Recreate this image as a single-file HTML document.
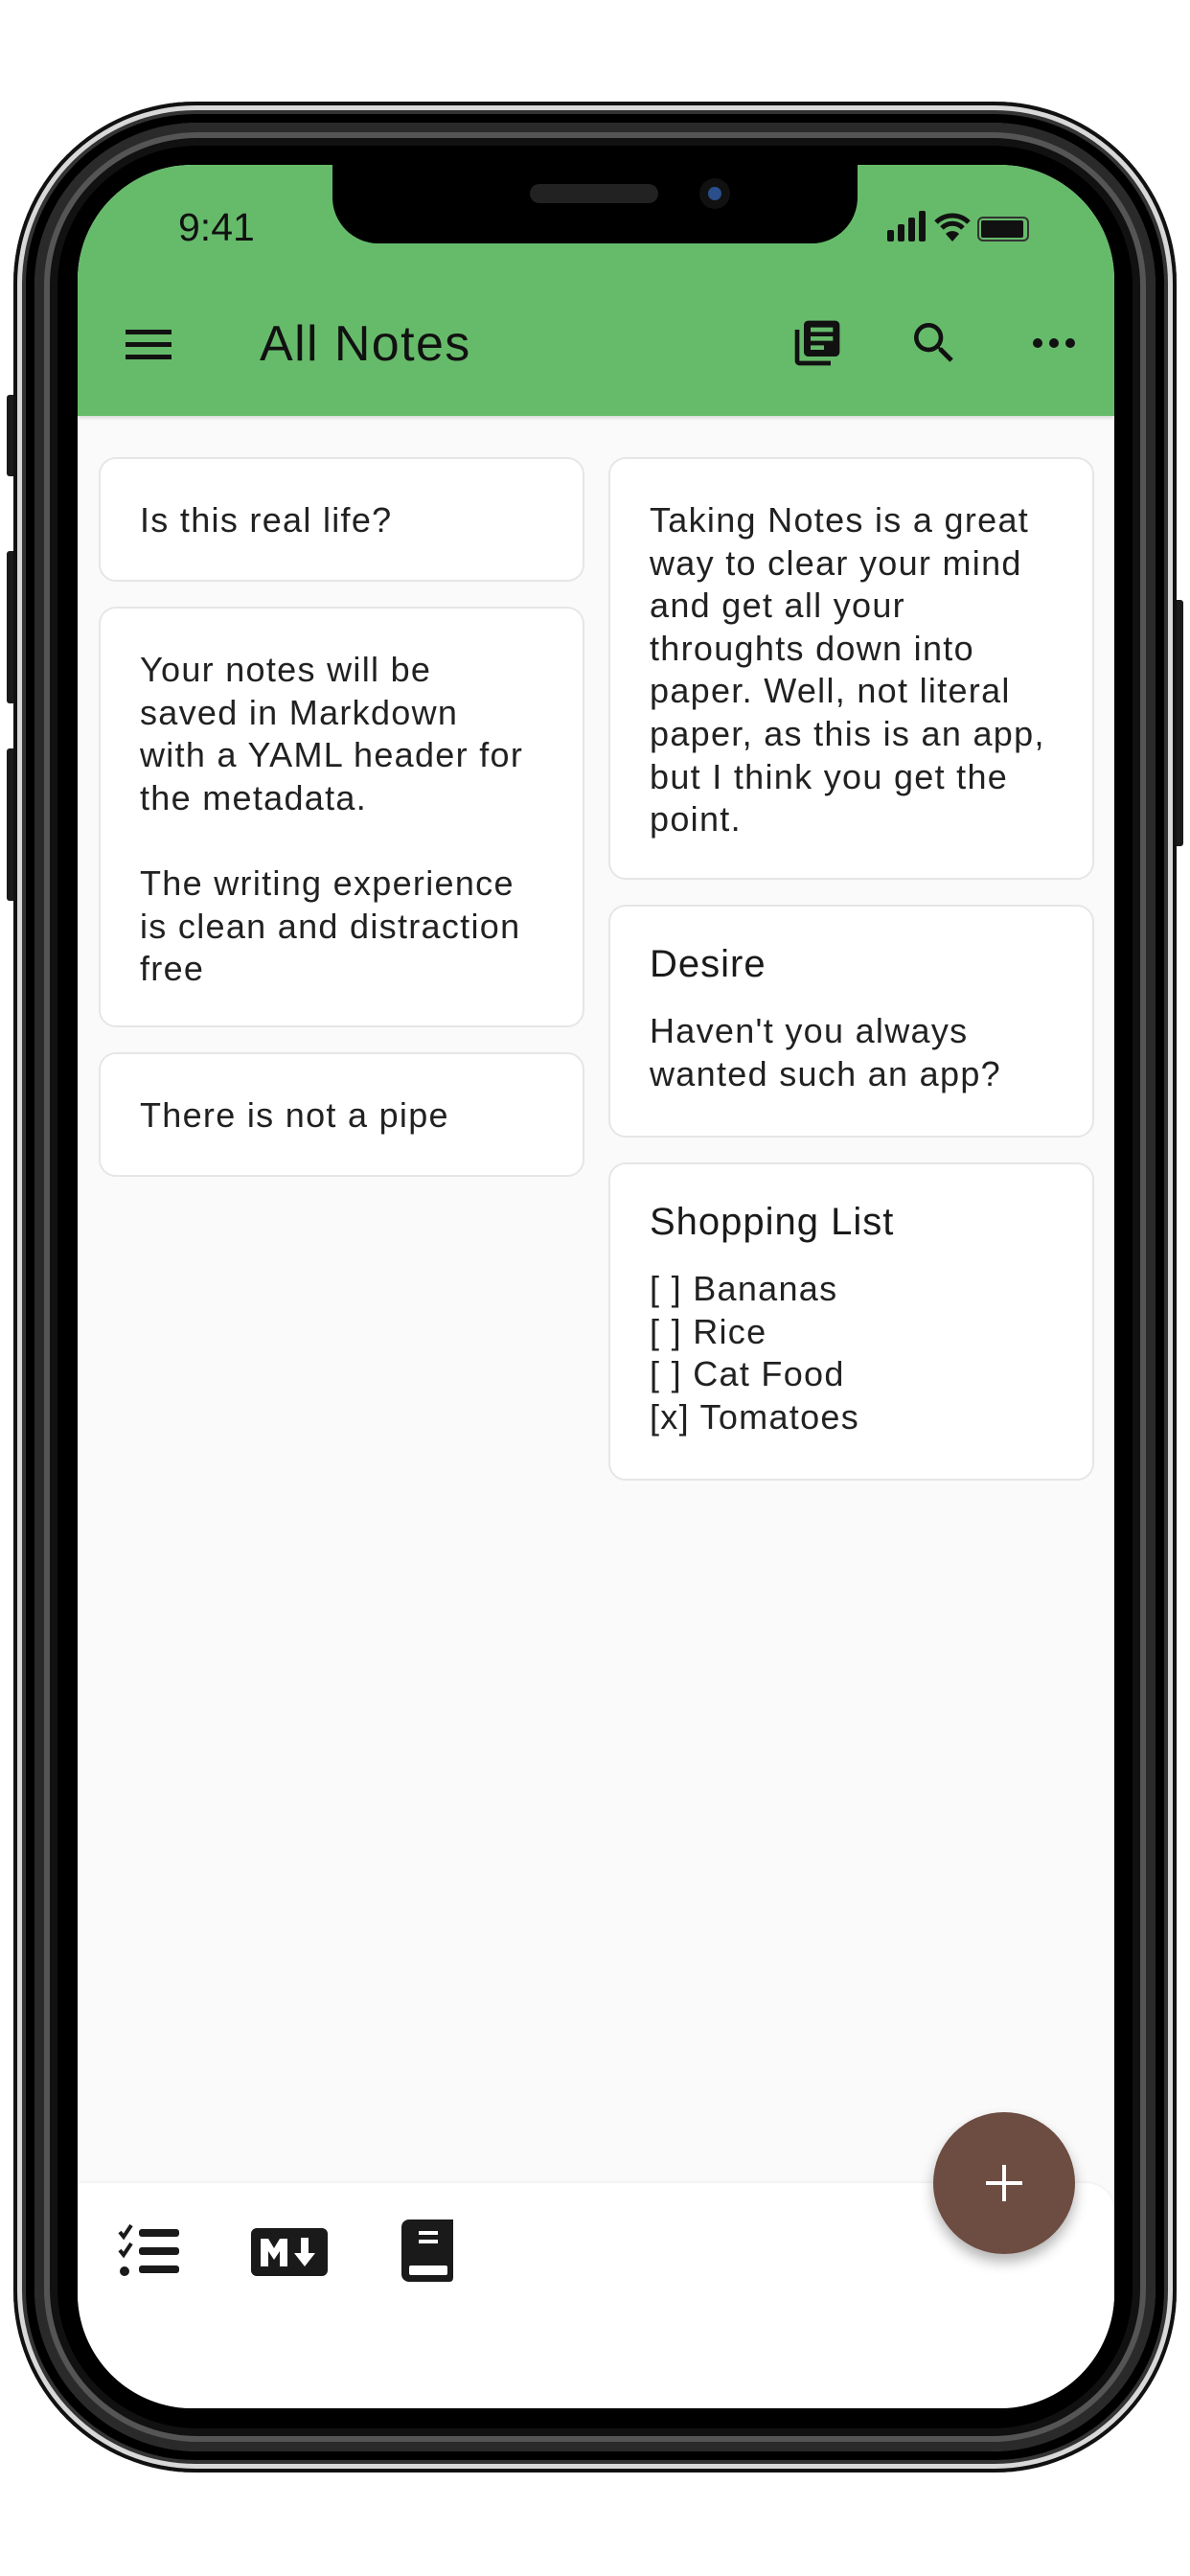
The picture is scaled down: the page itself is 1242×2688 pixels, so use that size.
<!DOCTYPE html>
<html><head><meta charset="utf-8">
<style>
*{margin:0;padding:0;box-sizing:border-box}
html,body{width:1242px;height:2688px;background:#fff;overflow:hidden;font-family:"Liberation Sans",sans-serif}
.abs{position:absolute}
#outer{left:14px;top:106px;width:1214px;height:2474px;border-radius:190px;background:#000;box-shadow:inset 0 0 0 4px #111,inset 0 0 0 9px #d8d8d8,inset 0 0 0 13px #333}
#bezel{left:36px;top:128px;width:1170px;height:2430px;border-radius:170px;background:#000;box-shadow:inset 0 0 0 10px #2a2a2a,inset 0 0 0 16px #555,inset 0 0 0 24px #111}
#screen{left:81px;top:172px;width:1082px;height:2341px;border-radius:120px;background:#fafafa;overflow:hidden}
#bar{left:0;top:0;width:1082px;height:262px;background:#66bb6a;box-shadow:0 2px 4px rgba(0,0,0,.15)}
#notch{left:266px;top:-2px;width:548px;height:84px;background:#000;border-radius:0 0 48px 48px}
.card{position:absolute;background:#fff;border:2px solid #e6e6e6;border-radius:18px;padding:42px 0 0 41px;color:#212121;font-size:36px;letter-spacing:1.3px;line-height:44.6px;white-space:nowrap}
.card h3{font-weight:normal;font-size:40px;letter-spacing:1px;line-height:44px;margin-bottom:26px;color:#1a1a1a}
#bottom{left:0;top:2106px;width:1082px;height:240px;background:#fff;border-radius:0 30px 0 0;box-shadow:0 -1px 3px rgba(0,0,0,.06)}
#fab{left:893px;top:2032px;width:148px;height:148px;border-radius:50%;background:#6d4c41;box-shadow:0 8px 14px rgba(0,0,0,.3)}
.btn{position:absolute;background:#1a1a1a;border-radius:3px}
</style></head><body>
<div class="btn" style="left:7px;top:412px;width:10px;height:85px"></div>
<div class="btn" style="left:7px;top:575px;width:10px;height:159px"></div>
<div class="btn" style="left:7px;top:781px;width:10px;height:159px"></div>
<div class="btn" style="left:1225px;top:626px;width:10px;height:257px"></div>
<div id="outer" class="abs"></div>
<div id="bezel" class="abs"></div>
<div id="screen" class="abs">
  <div id="bar" class="abs">
    <div class="abs" style="left:105px;top:42px;font-size:41px;color:#111">9:41</div>
    <svg class="abs" style="left:843px;top:44px" width="150" height="40" viewBox="0 0 150 40">
      <rect x="2" y="24" width="7" height="12" rx="2" fill="#111"/><rect x="13" y="18" width="7" height="18" rx="2" fill="#111"/><rect x="24" y="11" width="7" height="25" rx="2" fill="#111"/><rect x="35" y="4" width="7" height="32" rx="2" fill="#111"/>
      <path d="M53 16 A24 24 0 0 1 87 16" stroke="#111" stroke-width="5" fill="none"/><path d="M59 22 A15 15 0 0 1 81 22" stroke="#111" stroke-width="5" fill="none"/><path d="M70 36 L63 28 A10 10 0 0 1 77 28 Z" fill="#111"/>
      <rect x="97" y="11" width="52" height="24" rx="5" fill="none" stroke="#333" stroke-width="2"/><rect x="100" y="14" width="44" height="18" rx="2" fill="#111"/>
    </svg>
    <div id="notch" class="abs"></div>
    <div class="abs" style="left:472px;top:20px;width:134px;height:20px;border-radius:10px;background:#222"></div>
    <div class="abs" style="left:649px;top:14px;width:32px;height:32px;border-radius:50%;background:#111"><div style="margin:9px;width:14px;height:14px;border-radius:50%;background:#2a4f8a"></div></div>
    <svg class="abs" style="left:48px;top:168px" width="52" height="40"><rect x="2" y="4" width="48" height="5" fill="#111"/><rect x="2" y="17" width="48" height="5" fill="#111"/><rect x="2" y="30" width="48" height="5" fill="#111"/></svg>
    <div class="abs" style="left:190px;top:157px;font-size:52px;letter-spacing:1.4px;color:#111">All Notes</div>
    <svg class="abs" style="left:744px;top:158px" width="56" height="56" viewBox="0 0 24 24"><path fill="#111" d="M4 6H2v14c0 1.1.9 2 2 2h14v-2H4V6zm16-4H8c-1.1 0-2 .9-2 2v12c0 1.1.9 2 2 2h12c1.1 0 2-.9 2-2V4c0-1.1-.9-2-2-2zm-1 9H9V9h10v2zm-4 4H9v-2h6v2zm4-8H9V5h10v2z"/></svg>
    <svg class="abs" style="left:866px;top:158px" width="56" height="56" viewBox="0 0 24 24"><path fill="#111" d="M15.5 14h-.79l-.28-.27A6.47 6.47 0 0 0 16 9.5 6.5 6.5 0 1 0 9.5 16c1.61 0 3.090-.59 4.23-1.57l.27.28v.79l5 4.99L20.49 19l-4.99-5zm-6 0C7.01 14 5 11.99 5 9.5S7.01 5 9.5 5 14 7.01 14 9.5 11.99 14 9.5 14z"/></svg>
    <svg class="abs" style="left:996px;top:172px" width="46" height="28"><circle cx="6" cy="14" r="5" fill="#111"/><circle cx="23" cy="14" r="5" fill="#111"/><circle cx="40" cy="14" r="5" fill="#111"/></svg>
  </div>
  <div class="card" style="left:22px;top:305px;width:507px;height:130px">Is this real life?</div>
  <div class="card" style="left:22px;top:461px;width:507px;height:439px">Your notes will be<br>saved in Markdown<br>with a YAML header for<br>the metadata.<br><br>The writing experience<br>is clean and distraction<br>free</div>
  <div class="card" style="left:22px;top:926px;width:507px;height:130px">There is not a pipe</div>
  <div class="card" style="left:554px;top:305px;width:507px;height:441px">Taking Notes is a great<br>way to clear your mind<br>and get all your<br>throughts down into<br>paper. Well, not literal<br>paper, as this is an app,<br>but I think you get the<br>point.</div>
  <div class="card" style="left:554px;top:772px;width:507px;height:243px;padding-top:38px"><h3>Desire</h3>Haven't you always<br>wanted such an app?</div>
  <div class="card" style="left:554px;top:1041px;width:507px;height:332px;padding-top:38px"><h3>Shopping List</h3>[ ] Bananas<br>[ ] Rice<br>[ ] Cat Food<br>[x] Tomatoes</div>
  <div id="bottom" class="abs">
    <svg class="abs" style="left:42px;top:43px" width="66" height="58" viewBox="0 0 66 58"><path d="M2 8l4 5 8-12" stroke="#1a1a1a" stroke-width="4" fill="none"/><path d="M2 27l4 5 8-12" stroke="#1a1a1a" stroke-width="4" fill="none"/><circle cx="7" cy="49" r="5" fill="#1a1a1a"/><rect x="22" y="5" width="42" height="8" rx="3" fill="#1a1a1a"/><rect x="22" y="24" width="42" height="8" rx="3" fill="#1a1a1a"/><rect x="22" y="43" width="42" height="8" rx="3" fill="#1a1a1a"/></svg>
    <svg class="abs" style="left:181px;top:47px" width="80" height="50" viewBox="0 0 80 50"><rect x="0" y="0" width="80" height="50" rx="6" fill="#1a1a1a"/><path d="M10 40V11h8l6 10 6-10h8v29h-8V24l-6 9-6-9v16z" fill="#fff"/><path d="M52 10h8v16h7L56 40 45 26h7z" fill="#fff"/></svg>
    <svg class="abs" style="left:338px;top:38px" width="56" height="66" viewBox="0 0 56 66"><path d="M8 0h46v60c0 3-1 5-4 5H8c-4 0-8-3-8-8V8c0-5 4-8 8-8z" fill="#1a1a1a"/><rect x="18" y="12" width="20" height="4" fill="#fff"/><rect x="18" y="21" width="20" height="4" fill="#fff"/><rect x="8" y="48" width="40" height="10" rx="2" fill="#fff"/></svg>
  </div>
  <div id="fab" class="abs"><svg width="148" height="148"><rect x="72" y="55" width="4" height="38" fill="#fff"/><rect x="55" y="72" width="38" height="4" fill="#fff"/></svg></div>
</div>
</body></html>
